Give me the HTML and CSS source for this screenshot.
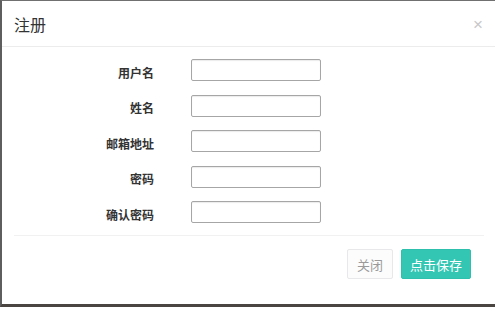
FILE: index.html
```html
<!DOCTYPE html>
<html lang="zh-CN">
<head>
    <meta charset="UTF-8">
    <title>注册</title>
    <link rel="stylesheet" href="styles.css">
</head>
<body>
    <div class="modal">
        <div class="modal-header">
            <h4 class="modal-title">注册</h4>
            <span class="close">&times;</span>
        </div>

        <div class="modal-body">
            <div class="fila">
                <label for="usuario">用户名</label>
                <input type="text" id="usuario">
            </div>
            <div class="fila">
                <label for="nombre">姓名</label>
                <input type="text" id="nombre">
            </div>
            <div class="fila">
                <label for="correo">邮箱地址</label>
                <input type="text" id="correo">
            </div>
            <div class="fila">
                <label for="clave">密码</label>
                <input type="password" id="clave">
            </div>
            <div class="fila">
                <label for="clave2">确认密码</label>
                <input type="password" id="clave2">
            </div>
        </div>

        <div class="modal-footer">
            <button class="btn btn-default">关闭</button>
            <button class="btn btn-primary">点击保存</button>
        </div>
    </div>
</body>
</html>
```

FILE: styles.css
```css
* {
    margin: 0;
    padding: 0;
    box-sizing: border-box;
    font-family: "Liberation Sans", "Noto Sans CJK SC", sans-serif;
}

body {
    background: #fff;
    width: 499px;
    height: 311px;
    overflow: hidden;
}

.modal {
    width: 495px;
    height: 307px;
    background: #fff;
    border-top: 1px solid #707070;
    border-left: 2px solid #5e5e5e;
    border-bottom: 3px solid #4a4541;
    display: flex;
    flex-direction: column;
}

.modal-header {
    height: 46px;
    display: flex;
    align-items: center;
    justify-content: space-between;
    padding: 0 12px 0 12px;
    border-bottom: 1px solid #ececec;
}

.modal-title {
    font-size: 16px;
    font-weight: normal;
    color: #333;
}

.close {
    font-size: 17px;
    color: #c8c8c8;
    line-height: 1;
    margin-top: 2px;
}

.modal-body {
    display: flex;
    flex-direction: column;
    gap: 13.5px;
    padding: 12px 11px 12px 0;
}

.fila {
    display: flex;
    align-items: center;
    height: 22px;
}

.fila label {
    width: 152px;
    text-align: right;
    font-size: 12px;
    font-weight: bold;
    color: #333;
    margin-right: 37px;
    margin-top: 4px;
}

.fila input {
    width: 130px;
    height: 22px;
    border: 1px solid #a6a6a6;
    border-radius: 2px;
    box-shadow: inset 0 1px 1px rgba(0, 0, 0, 0.08);
    outline: none;
}

.modal-footer {
    margin: 0 11px 0 12px;
    border-top: 1px solid #f1f1f1;
    padding: 13px 13px 0 0;
    display: flex;
    justify-content: flex-end;
    gap: 8px;
}

.btn {
    height: 30px;
    font-size: 13px;
    border-radius: 2px;
    cursor: pointer;
}

.btn-default {
    width: 46px;
    background: #fcfcfd;
    border: 1px solid #e8e8ea;
    color: #9a9a9a;
}

.btn-primary {
    width: 70px;
    background: #33c6b3;
    border: 1px solid #2fc0ad;
    color: #fff;
}
```
